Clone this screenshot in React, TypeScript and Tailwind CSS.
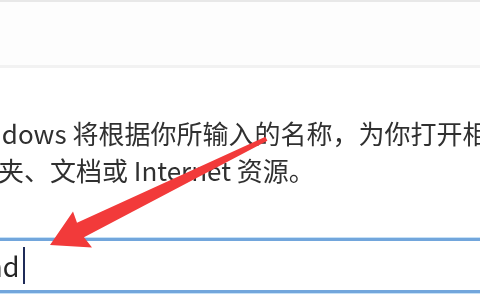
import React from "react";

const font = {
  fontFamily: '"Noto Sans CJK SC", "Noto Sans", sans-serif',
};

const Arrow: React.FC = () => (
  <svg
    className="absolute inset-0 pointer-events-none"
    width={480}
    height={300}
    viewBox="0 0 480 300"
  >
    <polygon
      points="50,245 73,211.5 77,222.8 265.4,136.8 267.4,140.8 84,237.2 92,247.5"
      fill="#f23a3a"
      style={{ filter: "blur(0.4px)" }}
    />
  </svg>
);

export default function App() {
  return (
    <div className="relative w-[480px] h-[300px] overflow-hidden bg-white" style={font}>
      <div className="h-[2px] bg-[#e8e8e8]" />
      <div className="h-[63px] bg-[#fdfdfd]" />
      <div className="h-[3px] bg-[#f2f2f2]" />

      <div className="pt-[46px] text-[26px] leading-[37px] text-[#303030] whitespace-nowrap blur-[0.3px]">
        <div className="ml-[-44px]">Windows 将根据你所输入的名称，为你打开相应的程序、文件</div>
        <div className="ml-[-54px]">文件夹、文档或 Internet 资源。</div>
      </div>

      <div className="mt-[50px] h-[55px] border-y-[3px] border-[#72a6dc] shadow-[0_0_0_1px_#c6e1f7] bg-white flex items-center whitespace-nowrap">
        <span className="ml-[-36px] text-[27px] text-[#262626] leading-none blur-[0.3px]">cmd</span>
        <span className="ml-[3px] w-[2px] h-[37px] bg-[#1f2b58]" />
      </div>

      <Arrow />
    </div>
  );
}
